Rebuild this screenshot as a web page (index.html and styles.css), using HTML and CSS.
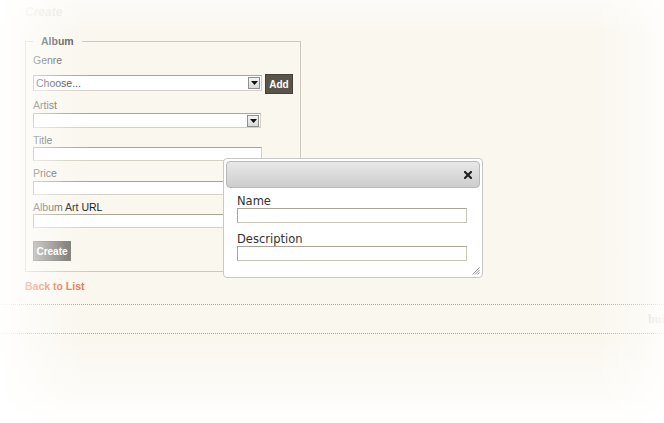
FILE: index.html
```html
<!DOCTYPE html>
<html>
<head>
<meta charset="utf-8">
<title>Create</title>
<link rel="stylesheet" href="styles.css">
</head>
<body>
<div class="page">
  <h2 class="title">Create</h2>
  <fieldset class="album">
    <legend>Album</legend>
    <div class="label l-genre">Genre</div>
    <div class="genre-row">
      <div class="select s-genre"><span class="select-text">Choose...</span><span class="select-arrow"><svg width="7" height="4" viewBox="0 0 7 4"><path d="M0 0H7L3.5 4Z" fill="#111"/></svg></span></div>
      <button class="btn-add" type="button">Add</button>
    </div>
    <div class="label l-artist">Artist</div>
    <div class="select s-artist"><span class="select-text"></span><span class="select-arrow"><svg width="7" height="4" viewBox="0 0 7 4"><path d="M0 0H7L3.5 4Z" fill="#111"/></svg></span></div>
    <div class="label l-std">Title</div>
    <input class="text-input" type="text">
    <div class="label l-std">Price</div>
    <input class="text-input i-gap" type="text">
    <div class="label l-std">Album <span class="dark">Art URL</span></div>
    <input class="text-input" type="text">
    <button class="btn-create" type="button">Create</button>
  </fieldset>
  <div class="back"><a class="back-link">Back to List</a></div>
  <div class="footer"><span class="footer-text">built with ASP.NET MVC 3</span></div>

  <div class="dialog">
    <div class="dialog-bar">
      <span class="dialog-close"><svg width="8" height="8" viewBox="0 0 8 8"><path d="M1 1L7 7M7 1L1 7" stroke="#222" stroke-width="2.2" stroke-linecap="square"/></svg></span>
    </div>
    <div class="dialog-body">
      <div class="d-label">Name</div>
      <input class="d-input" type="text">
      <div class="d-label d-gap">Description</div>
      <input class="d-input" type="text">
    </div>
    <span class="grip"><svg width="8" height="8" viewBox="0 0 8 8"><path d="M7.5 0.5L0.5 7.5M7.5 3L3 7.5M7.5 5.5L5.5 7.5" stroke="#888" stroke-width="0.9"/></svg></span>
  </div>
</div>
<div class="fade"></div>
</body>
</html>
```
FILE: styles.css
```css
html, body {
  margin: 0;
  padding: 0;
  height: 100%;
}
body {
  background: #faf7ef;
  overflow: hidden;
  font-family: "Liberation Sans", Arial, sans-serif;
  font-size: 10.5px;
  color: #333;
}
.page {
  position: relative;
  height: 100%;
  padding: 0 0 0 25px;
  box-sizing: border-box;
}
.title {
  margin: 0;
  padding-top: 6px;
  line-height: 13px;
  font-size: 12px;
  font-weight: bold;
  font-style: italic;
  color: #e2ded4;
}
.album {
  margin: 15px 0 0 0;
  width: 275px;
  box-sizing: border-box;
  border: 1px solid #cdc9bc;
  padding: 0 7px 10px 7px;
}
.album legend {
  padding: 0 8px;
  line-height: 14px;
  font-weight: bold;
  color: #555;
  font-size: 10.5px;
}
.label {
  line-height: 14px;
  color: #555;
}
.label .dark { color: #222; }
.l-genre { margin-top: 5px; }
.l-artist { margin-top: 4px; }
.l-std { margin-top: 5px; }
.genre-row {
  margin-top: 7px;
  display: flex;
  align-items: flex-start;
  gap: 3px;
  height: 20px;
}
.select {
  box-sizing: border-box;
  width: 229px;
  background: #fff;
  border: 1px solid;
  border-color: #a9a595 #d4d0c4 #d4d0c4 #a9a595;
  display: flex;
  align-items: center;
  justify-content: space-between;
  padding: 0 1px 0 2px;
}
.s-genre { height: 16px; margin-top: 1px; }
.s-artist { height: 15px; margin-top: 1px; width: 228px; }
.select-text {
  font-size: 10.5px;
  color: #444;
  line-height: 12px;
}
.select-arrow {
  box-sizing: border-box;
  width: 12px;
  height: 12px;
  border: 1px solid #8e8e8e;
  background: linear-gradient(#f4f4f4, #d8d8d8);
  display: flex;
  align-items: center;
  justify-content: center;
}
.select-arrow svg { display: block; }
.btn-add {
  box-sizing: border-box;
  height: 20px;
  width: 28px;
  padding: 0;
  border: 1px solid #45403a;
  background: #5b544b;
  color: #fff;
  font-family: "Liberation Sans", Arial, sans-serif;
  font-weight: bold;
  font-size: 10px;
}
.text-input {
  display: block;
  box-sizing: border-box;
  width: 229px;
  height: 14px;
  margin: 0;
  padding: 0 2px;
  background: #fff;
  border: 1px solid;
  border-color: #a9a595 #d4d0c4 #d4d0c4 #a9a595;
  outline: none;
}
.i-gap { margin-top: 1px; }
.btn-create {
  display: block;
  box-sizing: border-box;
  margin-top: 13px;
  height: 20px;
  width: 38px;
  padding: 0;
  border: 1px solid #77756f;
  background: linear-gradient(to right, #8f8d88, #73716c);
  color: #fff;
  font-family: "Liberation Sans", Arial, sans-serif;
  font-weight: bold;
  font-size: 10px;
}
.back {
  margin-top: 7px;
  line-height: 14px;
}
.back-link {
  color: #f0704c;
  font-weight: bold;
  font-size: 10.5px;
}
.footer {
  margin: 11px 0 0 -25px;
  border-top: 1px dotted #aca89b;
  border-bottom: 1px dotted #aca89b;
  height: 28px;
  display: flex;
  align-items: center;
  white-space: nowrap;
}
.footer-text {
  margin-left: 648px;
  font-family: "Liberation Serif", "Times New Roman", serif;
  font-weight: bold;
  font-size: 12px;
  color: #cfcbc4;
}
.fade {
  position: absolute;
  left: 0;
  top: 0;
  width: 100%;
  height: 100%;
  pointer-events: none;
  z-index: 1;
  background:
    linear-gradient(to right, rgba(255,255,255,0.95) 0, rgba(255,255,255,0.7) 20px, rgba(255,255,255,0.45) 40px, rgba(255,255,255,0.15) 65px, rgba(255,255,255,0) 90px),
    linear-gradient(to left, rgba(255,255,255,0.85) 0, rgba(255,255,255,0.4) 25px, rgba(255,255,255,0) 70px),
    linear-gradient(to top, rgba(255,255,255,0.95) 0, rgba(255,255,255,0.5) 35px, rgba(255,255,255,0) 85px),
    linear-gradient(to bottom, rgba(255,255,255,0.55) 0, rgba(255,255,255,0) 35px);
}
.dialog {
  position: absolute;
  left: 223px;
  top: 158px;
  z-index: 2;
  width: 260px;
  height: 120px;
  box-sizing: border-box;
  background: #fff;
  border: 1px solid #c8c8c8;
  border-radius: 4px;
  padding: 2px;
  font-family: "DejaVu Sans", Verdana, sans-serif;
}
.dialog-bar {
  box-sizing: border-box;
  height: 27px;
  border: 1px solid #b9b9b9;
  border-radius: 4px;
  background: linear-gradient(#e8e8e8, #cdcdcd);
  display: flex;
  align-items: center;
  justify-content: flex-end;
  padding-right: 7px;
}
.dialog-close svg { display: block; }
.dialog-body {
  padding: 6px 0 0 11px;
}
.d-label {
  font-size: 11.5px;
  line-height: 14px;
  color: #333;
}
.d-gap { margin-top: 9px; }
.d-input {
  display: block;
  box-sizing: border-box;
  width: 230px;
  height: 15px;
  margin: 0;
  padding: 0;
  border: 1px solid;
  border-color: #a9a595 #c9c5b9 #c9c5b9 #a9a595;
  background: #fff;
  outline: none;
}
.grip {
  position: absolute;
  right: 2px;
  bottom: 2px;
}
.grip svg { display: block; }
```
